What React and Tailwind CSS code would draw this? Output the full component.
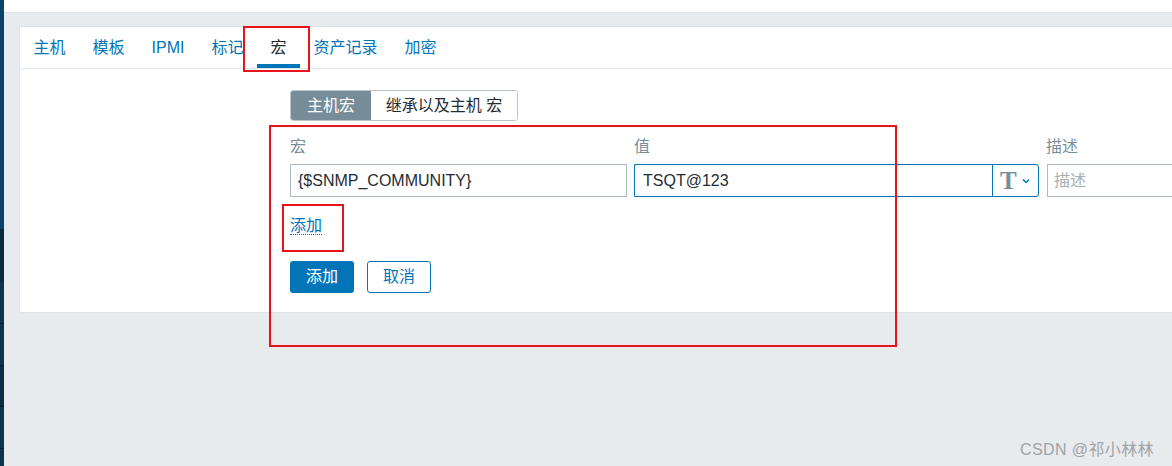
import React from 'react';

const tabs = ['主机', '模板', 'IPMI', '标记', '宏', '资产记录', '加密'];

function Sidebar() {
  // thin slice of the dark menu on the left edge
  return (
    <div className="w-[4px] shrink-0 flex flex-col bg-[#0c3350]">
      <div className="h-[229px] bg-[#0a4268]" />
      <div className="h-[54px] bg-[#0a2a40]" />
      <div className="h-[40px]" />
      <div className="h-[42px] border-t border-[#061d2e]" />
      <div className="h-[41px] border-t border-[#061d2e] bg-[#0a2d45]" />
      <div className="h-[42px] border-t border-[#061d2e]" />
      <div className="flex-1 border-t border-[#061d2e]" />
    </div>
  );
}

function Tabs() {
  return (
    <div className="flex h-[42px] border-b border-[#e3e7ea]">
      {tabs.map((t) => (
        <div
          key={t}
          className={
            t === '宏'
              ? 'relative px-[13.5px] pt-[9px] text-[#1f2c33]'
              : 'px-[13.5px] pt-[9px] text-[#0275b8]'
          }
        >
          {t}
          {t === '宏' && <div className="absolute left-0 right-0 bottom-[0px] h-[4px] bg-[#0275b8]" />}
        </div>
      ))}
    </div>
  );
}

function MacroForm() {
  return (
    <div className="pl-[270px] pt-[21px]">
      {/* segmented switch */}
      <div className="flex h-[31px] w-[228px] rounded-[3px] border border-[#bcc6cc] overflow-hidden">
        <div className="w-[80px] bg-[#768d99] text-white flex items-center justify-center">主机宏</div>
        <div className="flex-1 bg-white text-[#1f2c33] flex items-center justify-center">继承以及主机 宏</div>
      </div>

      <div className="flex mt-[16px] text-[#768d99] leading-[20px]">
        <div className="w-[344px] shrink-0">宏</div>
        <div className="w-[412px] shrink-0">值</div>
        <div className="shrink-0">描述</div>
      </div>

      <div className="flex mt-[7px] h-[33px]">
        <div className="w-[337px] shrink-0 border border-[#acbbc4] px-[7px] flex items-center text-[#1f2c33]">
          {'{$SNMP_COMMUNITY}'}
        </div>
        <div className="ml-[7px] w-[405px] shrink-0 flex border border-[#0275b8] rounded-r-[3px]">
          <div className="flex-1 px-[8px] flex items-center text-[#1f2c33]">TSQT@123</div>
          <div className="w-[46px] border-l border-[#0275b8] flex items-center pl-[7px] gap-[5px]">
            <span className="font-['Liberation_Serif',serif] font-bold text-[25px] text-[#768d99] leading-none">T</span>
            <svg width="8" height="6" viewBox="0 0 8 6">
              <path d="M1 1.5l3 3 3-3" fill="none" stroke="#0275b8" strokeWidth="1.5" />
            </svg>
          </div>
        </div>
        <div className="ml-[8px] w-[200px] shrink-0 border border-[#acbbc4] px-[6px] flex items-center text-[#a4aeb4]">描述</div>
      </div>

      <div className="mt-[19px] leading-[20px]">
        <span className="text-[#0275b8] border-b border-dotted border-[#0275b8]">添加</span>
      </div>

      <div className="flex gap-[13px] mt-[25px]">
        <button className="w-[64px] h-[32px] rounded-[3px] bg-[#0275b8] text-white">添加</button>
        <button className="w-[64px] h-[32px] rounded-[3px] border border-[#0275b8] bg-white text-[#0275b8]">取消</button>
      </div>
    </div>
  );
}

export default function App() {
  return (
    <div className="relative w-[1172px] h-[466px] overflow-hidden flex bg-[#e8ebee] text-[16px] font-['Liberation_Sans','Noto_Sans_CJK_SC',sans-serif]">
      <Sidebar />
      <div className="flex-1 flex flex-col min-w-0">
        <div className="h-[13px] shrink-0 bg-white border-b border-[#dde2e5]" />
        <div className="pl-[15px] pt-[13px]">
          <div className="w-[1400px] h-[287px] bg-white border border-[#dfe4e7]">
            <Tabs />
            <MacroForm />
          </div>
        </div>
      </div>

      {/* red annotation boxes */}
      <div className="absolute left-[243px] top-[26px] w-[67px] h-[46px] border-2 border-[#e8141c]" />
      <div className="absolute left-[269px] top-[125px] w-[628px] h-[222px] border-2 border-[#e8141c]" />
      <div className="absolute left-[282px] top-[204px] w-[62px] h-[48px] border-2 border-[#e8141c]" />

      <div className="absolute left-[1020px] top-[438px] text-[#a0a3a6] text-[16px] tracking-[0.4px]">CSDN @祁小林林</div>
    </div>
  );
}
